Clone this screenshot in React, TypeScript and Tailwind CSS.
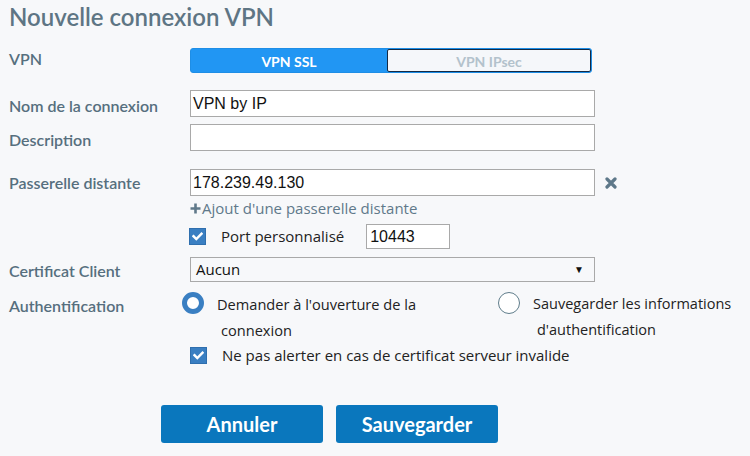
import React from "react";

const lato = { fontFamily: "Lato, 'Open Sans', sans-serif" };
const open = { fontFamily: "'Open Sans', 'Noto Sans', sans-serif" };
const arial = { fontFamily: "'Liberation Sans', Arial, sans-serif" };

function Check() {
  return (
    <span className="flex h-[17px] w-[17px] items-center justify-center bg-[#3a7fc2] border border-[#2f6fae]">
      <svg width="11" height="9" viewBox="0 0 11 9">
        <path d="M1.5 4.2 L4.3 7 L9.5 1.8" stroke="white" strokeWidth="2.4" fill="none" strokeLinecap="square" />
      </svg>
    </span>
  );
}

function Label({ children, className = "" }: { children: React.ReactNode; className?: string }) {
  return (
    <div className={"w-[181px] shrink-0 text-[16px] leading-[22px] text-[#566f7e] font-semibold " + className} style={lato}>
      {children}
    </div>
  );
}

export default function App() {
  return (
    <div className="w-[750px] h-[456px] bg-[#f7f8fa] pl-[9px] overflow-hidden">
      <div className="pt-[3px] text-[24px] leading-[28px] text-[#5e7584] font-semibold" style={lato}>
        Nouvelle connexion VPN
      </div>

      {/* VPN toggle */}
      <div className="flex mt-[17px] h-[25px]">
        <Label className="leading-[20px]">VPN</Label>
        <div className="flex w-[402px] h-[25px] rounded-[3px] border border-[#1e8ee6] bg-[#2196f3] overflow-hidden">
          <div className="w-[196px] flex items-center justify-center pt-[1px] text-white text-[14px] font-bold" style={lato}>
            VPN SSL
          </div>
          <div className="flex-1 flex items-center justify-center pt-[1px] bg-[#f5f7fa] border-[1.5px] border-[#142a44] rounded-[2px] text-[#b3c2cc] text-[14px] font-bold" style={lato}>
            VPN IPsec
          </div>
        </div>
      </div>

      {/* Nom */}
      <div className="flex items-center mt-[17px]">
        <Label className="pt-[5px]">Nom de la connexion</Label>
        <div className="w-[405px] h-[27px] bg-white border border-[#a9a9a9] pl-[2px] flex items-center text-[16px] text-[#111]" style={arial}>
          VPN by IP
        </div>
      </div>

      {/* Description */}
      <div className="flex items-center mt-[7px]">
        <Label className="pt-[5px]">Description</Label>
        <div className="w-[405px] h-[27px] bg-white border border-[#a9a9a9]" />
      </div>

      {/* Passerelle */}
      <div className="flex items-center mt-[18px]">
        <Label>Passerelle distante</Label>
        <div className="w-[405px] h-[27px] bg-white border border-[#a9a9a9] pl-[2px] flex items-center text-[16px] text-[#111]" style={arial}>
          178.239.49.130
        </div>
        <svg width="12" height="12" viewBox="0 0 12 12" className="ml-[10px]">
          <path d="M2 2 L10 10 M10 2 L2 10" stroke="#5e7889" strokeWidth="3.2" strokeLinecap="round" />
        </svg>
      </div>

      <div className="flex">
        <div className="w-[181px] shrink-0" />
        <div className="text-[15px] leading-[24px] text-[#60798a] flex items-center" style={open}>
          <svg width="11" height="11" viewBox="0 0 11 11" className="mr-[1px]">
            <path d="M5.5 0.5 V10.5 M0.5 5.5 H10.5" stroke="#60798a" strokeWidth="2.6" />
          </svg>
          Ajout d'une passerelle distante
        </div>
      </div>

      {/* Port */}
      <div className="flex items-center mt-[4px] h-[25px]">
        <div className="w-[180px] shrink-0" />
        <Check />
        <span className="ml-[15px] text-[15px] text-[#222]" style={open}>Port personnalisé</span>
        <div className="ml-[22px] w-[84px] h-[25px] bg-white border border-[#a9a9a9] pl-[3px] flex items-center text-[16px] text-[#111]" style={arial}>
          10443
        </div>
      </div>

      {/* Certificat */}
      <div className="flex items-center mt-[8px]">
        <Label className="pt-[3px]">Certificat Client</Label>
        <div className="w-[405px] h-[25px] bg-[#f7f8fa] border border-[#a9a9a9] pl-[5px] pr-[10px] flex items-center justify-between text-[15px] text-[#111]" style={open}>
          <span>Aucun</span>
          <span className="text-[10px] text-[#111]">▼</span>
        </div>
      </div>

      {/* Auth */}
      <div className="flex mt-[9px]">
        <Label className="pt-[4px]">Authentification</Label>
        <div className="flex flex-col">
          <div className="flex -ml-[8px]">
            <div className="flex w-[316px]">
              <span className="mt-[1px] h-[22px] w-[22px] rounded-full border-[5px] border-[#3a7fc2] bg-white shrink-0" />
              <div className="ml-[13px] text-[14.6px] leading-[26px] text-[#222]" style={open}>
                Demander à l'ouverture de la
                <div className="pl-[4px]">connexion</div>
              </div>
            </div>
            <div className="flex">
              <span className="mt-[1px] h-[22px] w-[22px] rounded-full border border-[#607d8b] bg-white shrink-0" />
              <div className="ml-[13px] text-[14.5px] leading-[26px] text-[#222]" style={open}>
                Sauvegarder les informations
                <div className="pl-[4px]">d'authentification</div>
              </div>
            </div>
          </div>
          <div className="flex items-center mt-[1px]">
            <Check />
            <span className="ml-[15px] text-[15px] text-[#222]" style={open}>
              Ne pas alerter en cas de certificat serveur invalide
            </span>
          </div>
        </div>
      </div>

      {/* Buttons */}
      <div className="flex gap-[13px] mt-[38px] pl-[152px]">
        <button className="w-[162px] h-[38px] rounded-[3px] bg-[#0a77bd] text-white text-[20px] font-bold" style={lato}>
          Annuler
        </button>
        <button className="w-[162px] h-[38px] rounded-[3px] bg-[#0a77bd] text-white text-[20px] font-bold" style={lato}>
          Sauvegarder
        </button>
      </div>
    </div>
  );
}
